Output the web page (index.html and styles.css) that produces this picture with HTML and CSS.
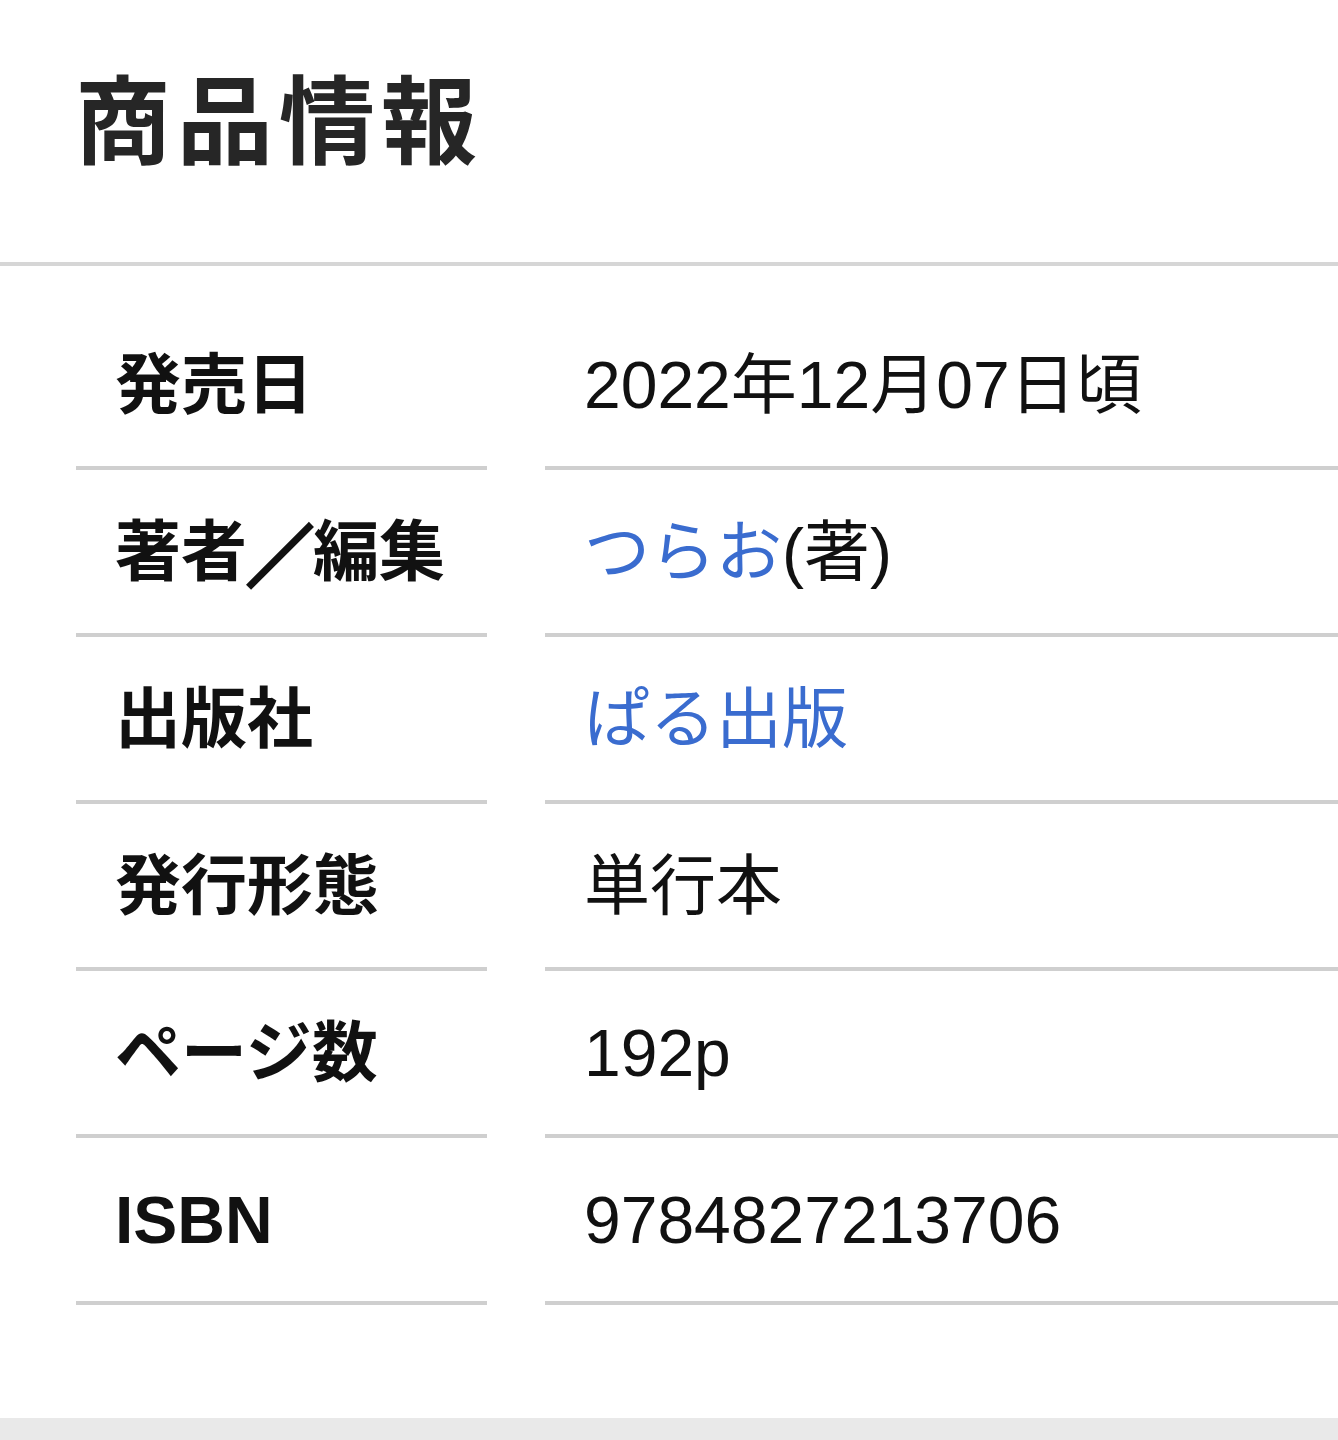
FILE: index.html
```html
<!DOCTYPE html>
<html lang="ja">
<head>
<meta charset="utf-8">
<title>商品情報</title>
<link rel="stylesheet" href="styles.css">
</head>
<body>
<section class="card">
  <header class="card-head">
    <h2 class="title">商品情報</h2>
  </header>
  <dl class="spec">
    <dt class="label">発売日</dt>
    <dd class="value">2022年12月07日頃</dd>
    <dt class="label">著者<span class="slash">／</span>編集</dt>
    <dd class="value"><a class="link" href="#">つらお</a>(著)</dd>
    <dt class="label">出版社</dt>
    <dd class="value"><a class="link" href="#">ぱる出版</a></dd>
    <dt class="label">発行形態</dt>
    <dd class="value">単行本</dd>
    <dt class="label">ページ数</dt>
    <dd class="value">192p</dd>
    <dt class="label">ISBN</dt>
    <dd class="value">9784827213706</dd>
  </dl>
</section>
</body>
</html>
```
FILE: styles.css
```css
html, body {
  margin: 0;
  padding: 0;
}
body {
  background: #e9e9e9;
  font-family: "Liberation Sans", "Noto Sans CJK JP", sans-serif;
  color: #111;
}
.card {
  background: #fff;
  height: 1418px;
  box-shadow: 0 5px 12px rgba(0,0,0,0.22);
  position: relative;
}
.card-head {
  height: 266px;
  box-sizing: border-box;
  padding: 67px 0 0 75px;
  border-bottom: 4px solid #d6d6d6;
}
.title {
  margin: 0;
  font-family: "Noto Sans CJK JP", sans-serif;
  font-weight: 700;
  font-size: 96px;
  line-height: 96px;
  letter-spacing: 6px;
  color: #262626;
}
.spec {
  margin: 0;
  padding: 37px 0 0 76px;
  display: grid;
  grid-template-columns: 411px 1fr;
  column-gap: 58px;
}
.label, .value {
  margin: 0;
  height: 163px;
  display: flex;
  align-items: center;
  border-bottom: 4px solid #cfcfcf;
  font-size: 66px;
  line-height: 1;
}
.label {
  padding-left: 39px;
  font-weight: 700;
  color: #111;
}
.slash {
  font-family: "Noto Sans CJK JP", sans-serif;
  -webkit-text-stroke: 4px #111;
}
.value {
  padding-left: 39px;
  font-weight: 400;
  color: #111;
}
.link {
  color: #3a6ccf;
  text-decoration: none;
}
```
